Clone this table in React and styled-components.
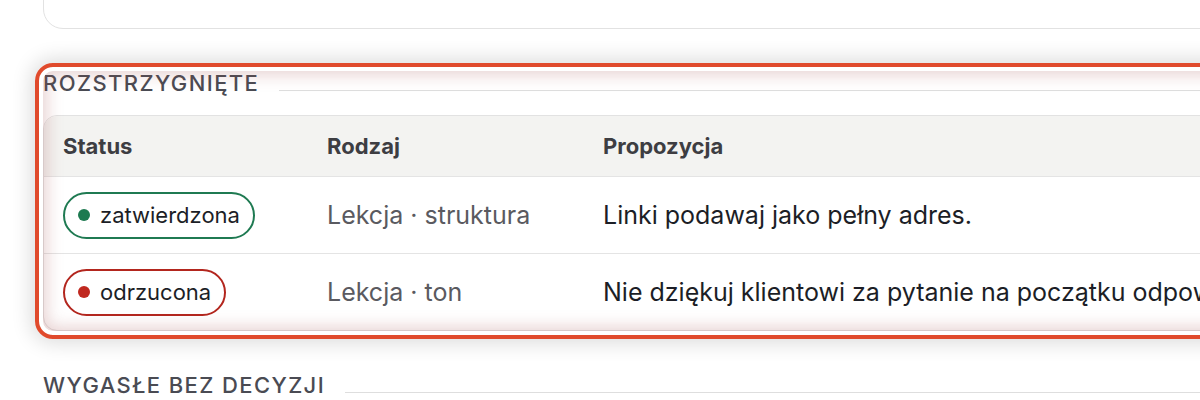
import styled, { createGlobalStyle } from "styled-components"

const GlobalStyle = createGlobalStyle`
  html, body {
    margin: 0;
    background: #ffffff;
    overflow: hidden;
  }
  body {
    font-family: Inter, "Noto Sans", "Liberation Sans", sans-serif;
    color: #1c1e26;
  }
`

const rows = [
  {
    id: 1,
    status: "zatwierdzona",
    tone: "ok",
    kind: "Lekcja · struktura",
    text: "Linki podawaj jako pełny adres.",
  },
  {
    id: 2,
    status: "odrzucona",
    tone: "bad",
    kind: "Lekcja · ton",
    text: "Nie dziękuj klientowi za pytanie na początku odpowiedzi.",
  },
]

const tones = {
  ok: { border: "#1f7a52", dot: "#1d7a50" },
  bad: { border: "#b3261e", dot: "#c0281f" },
}

function App() {
  return (
    <>
      <GlobalStyle />
      <Page>
        <TopCard />
        <Section>
          <Heading>
            <HeadingText>Rozstrzygnięte</HeadingText>
            <Rule />
          </Heading>
          <Table>
            <HeadRow>
              <Th>Status</Th>
              <Th>Rodzaj</Th>
              <Th>Propozycja</Th>
            </HeadRow>
            {rows.map((row) => (
              <Row key={row.id}>
                <Cell>
                  <Badge $tone={row.tone}>
                    <Dot $tone={row.tone} />
                    {row.status}
                  </Badge>
                </Cell>
                <Kind>{row.kind}</Kind>
                <Cell>{row.text}</Cell>
              </Row>
            ))}
          </Table>
        </Section>
        <Heading $next>
          <HeadingText>Wygasłe bez decyzji</HeadingText>
          <Rule />
        </Heading>
      </Page>
    </>
  )
}
export default App

const Page = styled.div`
  width: 1500px;
  padding-left: 43px;
  display: flex;
  flex-direction: column;
`
const TopCard = styled.div`
  margin-top: -70px;
  height: 97px;
  background: #ffffff;
  border: 1px solid #e2e2e2;
  border-radius: 20px;
`
const Section = styled.section`
  position: relative;
  margin-top: 42px;
  border-radius: 12px;

  &::after {
    content: "";
    position: absolute;
    inset: -8px;
    border: 4px solid #e04a2c;
    border-radius: 18px;
    pointer-events: none;
    box-shadow: 0 0 20px 4px rgba(0, 0, 0, 0.14),
      inset 0 0 0 4px #ffffff,
      inset 0 0 16px 8px rgba(165, 80, 80, 0.26);
  }
`
const Heading = styled.div`
  display: flex;
  align-items: baseline;
  gap: 20px;
  margin-top: ${(p) => (p.$next ? "42px" : "0")};
`
const HeadingText = styled.h2`
  margin: 0;
  font-size: 22px;
  line-height: 25px;
  font-weight: 500;
  letter-spacing: 1.4px;
  text-transform: uppercase;
  color: #4a4b53;
  white-space: nowrap;
`
const Rule = styled.div`
  flex: 1;
  height: 1px;
  background: #dedede;
`
const Table = styled.div`
  margin-top: 19px;
  border: 1px solid #e2e2e2;
  border-radius: 14px;
  overflow: hidden;
  background: #ffffff;
`
const HeadRow = styled.div`
  display: grid;
  grid-template-columns: 264px 276px 1fr;
  align-items: center;
  height: 60px;
  background: #f3f3f1;
`
const Row = styled.div`
  display: grid;
  grid-template-columns: 264px 276px 1fr;
  align-items: center;
  height: 76px;
  border-top: 1px solid #e4e4e4;
`
const Th = styled.div`
  padding-left: 19px;
  font-size: 22px;
  font-weight: 700;
  color: #3d3d42;
`
const Cell = styled.div`
  padding-left: 19px;
  font-size: 25px;
  color: #1c1e26;
  white-space: nowrap;
`
const Kind = styled(Cell)`
  color: #5a5a60;
`
const Badge = styled.span`
  display: inline-flex;
  align-items: center;
  gap: 10px;
  height: 47px;
  box-sizing: border-box;
  padding: 0 13px 0 13px;
  border: 2px solid ${(p) => tones[p.$tone].border};
  border-radius: 999px;
  font-size: 22px;
  color: #1c1e26;
`
const Dot = styled.span`
  width: 12px;
  height: 12px;
  border-radius: 50%;
  background: ${(p) => tones[p.$tone].dot};
`
